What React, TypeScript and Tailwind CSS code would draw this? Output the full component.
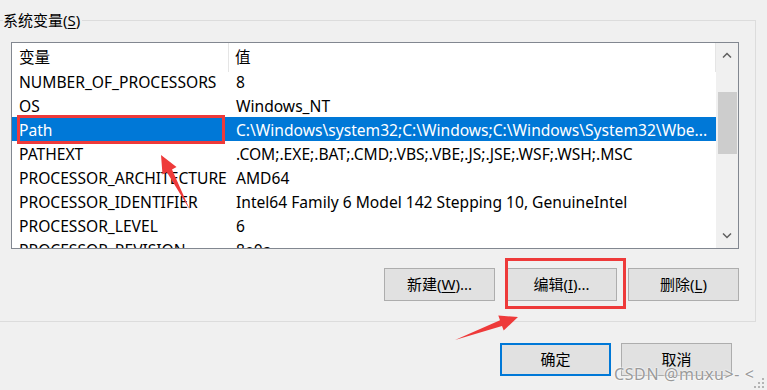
const rows: [string, string][] = [
  ['NUMBER_OF_PROCESSORS', '8'],
  ['OS', 'Windows_NT'],
  ['Path', 'C:\\Windows\\system32;C:\\Windows;C:\\Windows\\System32\\Wbe...'],
  ['PATHEXT', '.COM;.EXE;.BAT;.CMD;.VBS;.VBE;.JS;.JSE;.WSF;.WSH;.MSC'],
  ['PROCESSOR_ARCHITECTURE', 'AMD64'],
  ['PROCESSOR_IDENTIFIER', 'Intel64 Family 6 Model 142 Stepping 10, GenuineIntel'],
  ['PROCESSOR_LEVEL', '6'],
  ['PROCESSOR_REVISION', '8e0a'],
];

function Btn({ label, hot, rest, focus }: { label: string; hot?: string; rest?: string; focus?: boolean }) {
  return (
    <button
      className={
        'w-[111px] h-[33px] bg-[#e1e1e1] text-[15px] text-black flex items-center justify-center ' +
        (focus ? 'border-2 border-[#0078d7]' : 'border border-[#adadad]')
      }
    >
      {label}
      {hot && <span className="underline underline-offset-2">{hot}</span>}
      {rest}
    </button>
  );
}

export default function App() {
  return (
    <div
      className="relative w-[767px] h-[390px] overflow-hidden bg-[#f0f0f0] text-black"
      style={{ fontFamily: '"Noto Sans", "Noto Sans CJK SC", sans-serif' }}
    >
      {/* group box */}
      <div className="relative mt-[20px] ml-[-10px] w-[766px] h-[302px] border border-[#dcdcdc] pl-[20px] pt-[21px]">
        <div className="absolute left-[12px] top-[-12px] bg-[#f0f0f0] pr-[2px] text-[15px] leading-[22px]">
          系统变量(<span className="underline underline-offset-2">S</span>)
        </div>

        {/* list view */}
        <div className="flex w-[728px] h-[207px] border border-[#828790] bg-white">
          <div className="flex-1 overflow-hidden text-[15.6px]">
            <div className="grid grid-cols-[217px_1fr] h-[26px] leading-[29px]">
              <div className="pl-[7px] border-r border-[#e5e5e5]">变量</div>
              <div className="pl-[6px] border-r border-[#e5e5e5]">值</div>
            </div>
            {rows.map(([k, v]) => {
              const sel = k === 'Path';
              return (
                <div
                  key={k}
                  className={
                    'grid grid-cols-[218px_1fr] h-[24px] pt-[1px] leading-[24px] whitespace-nowrap ' +
                    (sel ? 'bg-[#0078d7] text-white' : '')
                  }
                >
                  <div className="pl-[7px]">{k}</div>
                  <div className="pl-[6px] overflow-hidden">{v}</div>
                </div>
              );
            })}
          </div>
          {/* scrollbar */}
          <div className="w-[22px] bg-[#f0f0f0] flex flex-col items-center">
            <div className="h-[24px] w-full flex items-center justify-center">
              <svg width="10" height="6" viewBox="0 0 10 6">
                <path d="M1 5.5 L5 1.5 L9 5.5" fill="none" stroke="#606060" strokeWidth="1.5" />
              </svg>
            </div>
            <div className="mt-[25px] w-[19px] h-[62px] bg-[#cdcdcd]" />
            <div className="flex-1" />
            <div className="h-[24px] w-full flex items-center justify-center">
              <svg width="10" height="6" viewBox="0 0 10 6">
                <path d="M1 0.5 L5 4.5 L9 0.5" fill="none" stroke="#606060" strokeWidth="1.5" />
              </svg>
            </div>
          </div>
        </div>

        <div className="flex justify-end w-[728px] mt-[19px] gap-[11px]">
          <Btn label="新建(" hot="W" rest=")..." />
          <Btn label="编辑(" hot="I" rest=")..." />
          <Btn label="删除(" hot="L" rest=")" />
        </div>
      </div>

      <div className="flex justify-end gap-[10px] mt-[21px] pr-[35px]">
        <Btn label="确定" focus />
        <Btn label="取消" />
      </div>

      {/* annotations */}
      <div className="absolute left-[17px] top-[115px] w-[208px] h-[29px] border-[3px] border-[#ee3a3a]" />
      <div className="absolute left-[505px] top-[258px] w-[121px] h-[51px] border-[3px] border-[#ee3a3a]" />
      <svg className="absolute left-0 top-0 pointer-events-none" width="767" height="390">
        <polygon
          points="161,155 176.5,167 172,169.4 190,210 166.9,172.2 162.5,174.6"
          fill="#ee3a3a"
        />
        <polygon
          points="518,317 503.7,330.6 502,325.9 455,340 500,320.3 498.3,315.6"
          fill="#ee3a3a"
        />
        <g fill="#b4b4b4">
          <rect x="762" y="378" width="2" height="2" />
          <rect x="758" y="382" width="2" height="2" />
          <rect x="762" y="382" width="2" height="2" />
          <rect x="754" y="386" width="2" height="2" />
          <rect x="758" y="386" width="2" height="2" />
          <rect x="762" y="386" width="2" height="2" />
        </g>
      </svg>
      <div
        className="absolute left-[614px] top-[362px] text-[16px] text-[#9a9a9a] tracking-[0.6px] whitespace-nowrap"
        style={{ textShadow: '0 0 2px #fff, 0 0 2px #fff' }}
      >
        CSDN @muxu&gt;- &lt;
      </div>
    </div>
  );
}
